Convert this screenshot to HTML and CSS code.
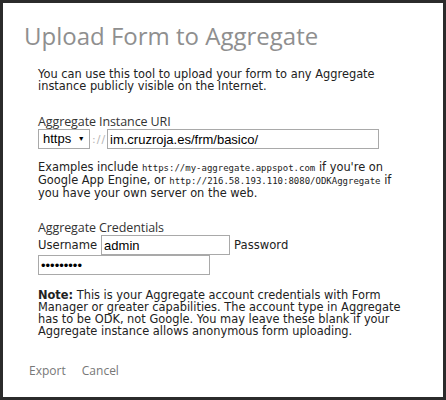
FILE: index.html
```html
<!DOCTYPE html>
<html lang="en">
<head>
<meta charset="UTF-8">
<title>Upload Form to Aggregate</title>
<link rel="stylesheet" href="styles.css">
</head>
<body>
  <div class="dialog">
    <h1 class="dialog-title">Upload Form to Aggregate</h1>

    <div class="dialog-body">
      <p class="intro">You can use this tool to upload your form to any Aggregate instance publicly visible on the Internet.</p>

      <div class="field-label">Aggregate Instance URI</div>
      <div class="uri-row">
        <div class="scheme">https <span class="caret">&#9660;</span></div>
        <span class="sep">://</span>
        <input class="uri-input" type="text" value="im.cruzroja.es/frm/basico/">
      </div>

      <p class="examples">Examples include <code>https://my-aggregate.appspot.com</code> if you're on Google App Engine, or <code>http://216.58.193.110:8080/ODKAggregate</code> if you have your own server on the web.</p>

      <div class="field-label cred-title">Aggregate Credentials</div>
      <div class="cred-row">
        <span class="cred-label">Username</span>
        <input class="user-input" type="text" value="admin">
        <span class="cred-label">Password</span>
      </div>
      <input class="pass-input" type="password" value="xxxxxxxxx">

      <p class="note"><b>Note:</b> This is your Aggregate account credentials with Form Manager or greater capabilities. The account type in Aggregate has to be ODK, not Google. You may leave these blank if your Aggregate instance allows anonymous form uploading.</p>
    </div>

    <div class="dialog-actions">
      <a href="#">Export</a>
      <a href="#">Cancel</a>
    </div>
  </div>
</body>
</html>
```

FILE: styles.css
```css
body {
  margin: 0;
  padding: 3px;
  background: #2b2b2b;
}

.dialog {
  width: 440px;
  height: 394px;
  background: #fff;
  box-sizing: border-box;
  font-family: "DejaVu Sans", Verdana, sans-serif;
  color: #222;
}

.dialog-title {
  margin: 0;
  padding: 18px 0 0 21px;
  font-family: "Open Sans", sans-serif;
  font-weight: normal;
  font-size: 24px;
  line-height: 30px;
  color: #8f8f8f;
}

.dialog-body {
  padding: 0 0 0 35px;
  width: 372px;
}

.intro,
.examples,
.note {
  margin: 0;
  font-size: 11.4px;
  line-height: 12px;
}

.intro {
  margin-top: 17px;
}

.field-label {
  font-family: "Open Sans", sans-serif;
  font-size: 12.5px;
  line-height: 14px;
  color: #333;
  margin-top: 23px;
  letter-spacing: -0.1px;
}

.uri-row {
  display: flex;
  align-items: center;
}

.scheme {
  box-sizing: border-box;
  width: 52px;
  height: 20px;
  border: 1px solid #a9a9a9;
  font-family: "Liberation Sans", Arial, sans-serif;
  font-size: 13px;
  line-height: 18px;
  padding-left: 4px;
  color: #000;
}

.caret {
  font-size: 7px;
  vertical-align: 2px;
  margin-left: 3px;
}

.sep {
  width: 17px;
  font-size: 11px;
  letter-spacing: 1px;
  color: #b5b5b5;
  padding-left: 2px;
  box-sizing: border-box;
}

input {
  box-sizing: border-box;
  height: 20px;
  border: 1px solid #a9a9a9;
  font-family: "Liberation Sans", Arial, sans-serif;
  font-size: 13px;
  padding: 0 2px;
  margin: 0;
  color: #000;
}

.uri-input {
  width: 272px;
}

.examples {
  margin-top: 12px;
}

code {
  font-family: "DejaVu Sans Mono", monospace;
  font-size: 9px;
}

.cred-title {
  margin-top: 22px;
}

.cred-row {
  display: flex;
  align-items: center;
  gap: 4px;
}

.cred-label {
  font-size: 11.6px;
}

.user-input {
  width: 129px;
}

.pass-input {
  width: 172px;
  display: block;
}

.note {
  margin-top: 14px;
}

.dialog-actions {
  padding: 23px 0 0 26px;
}

.dialog-actions a {
  font-family: "Open Sans", sans-serif;
  font-size: 12px;
  color: #777;
  text-decoration: none;
  margin-right: 11px;
}
```
